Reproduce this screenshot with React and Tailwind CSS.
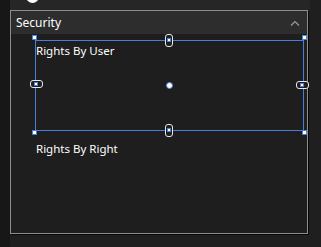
import React from "react";

function Handle({ x, y }) {
  return (
    <div
      className="absolute w-[5px] h-[5px] bg-white border border-[#4a7fd8]"
      style={{ left: x - 2, top: y - 2 }}
    />
  );
}

function Capsule({ x, y, vertical }) {
  const w = vertical ? 8 : 13;
  const h = vertical ? 13 : 8;
  return (
    <div
      className="absolute rounded-[3px] border border-[#e8e8e8] bg-[#1e1e1e] flex items-center justify-center"
      style={{ left: x - w / 2, top: y - h / 2, width: w, height: h }}
    >
      <div className="w-[4px] h-[4px] bg-white border border-[#4a7fd8]" />
    </div>
  );
}

export default function App() {
  return (
    <div
      className="w-[321px] h-[247px] bg-[#1f1f1f] flex overflow-hidden"
      style={{ fontFamily: '"Segoe UI", "Noto Sans", "Open Sans", sans-serif' }}
    >
      <div className="w-[10px] h-full bg-[#171717]" />
      <div className="w-[300px] h-full flex flex-col">
        <div className="h-[10px] bg-[#262626] relative overflow-hidden">
          <div className="absolute left-[16px] top-[-10px] w-[13px] h-[13px] rounded-full bg-white" />
        </div>
        <div className="w-[298px] h-[224px] border border-[#8c8c8c] shadow-[1px_1px_0_#080808] flex flex-col bg-[#1e1e1e]">
          <div className="h-[23px] bg-[#2d2d2d] flex items-center justify-between pl-[5px] pr-[7px]">
            <span className="text-[12px] text-white leading-none">Security</span>
            <svg width="10" height="6" viewBox="0 0 10 6" fill="none">
              <path d="M1 5.5 L5 1.5 L9 5.5" stroke="#9a9a9a" strokeWidth="1.2" />
            </svg>
          </div>
          <div className="relative flex-1 flex flex-col pl-[25px]">
            <div className="pt-[10px] text-[11.5px] text-white leading-[14px]">Rights By User</div>
            <div className="pt-[84px] text-[11.5px] text-white leading-[14px]">Rights By Right</div>
            <div
              className="absolute border border-[#4a7fd8]"
              style={{ left: 24, top: 6, width: 269, height: 91 }}
            />
            <Handle x={23} y={3} />
            <Handle x={293} y={3} />
            <Handle x={23} y={98} />
            <Handle x={293} y={98} />
            <Capsule x={158} y={6} vertical />
            <Capsule x={158} y={96} vertical />
            <Capsule x={25} y={50} />
            <Capsule x={291} y={51} />
            <div
              className="absolute w-[7px] h-[7px] rounded-full bg-white border border-[#4a7fd8]"
              style={{ left: 155, top: 48 }}
            />
          </div>
        </div>
      </div>
    </div>
  );
}
